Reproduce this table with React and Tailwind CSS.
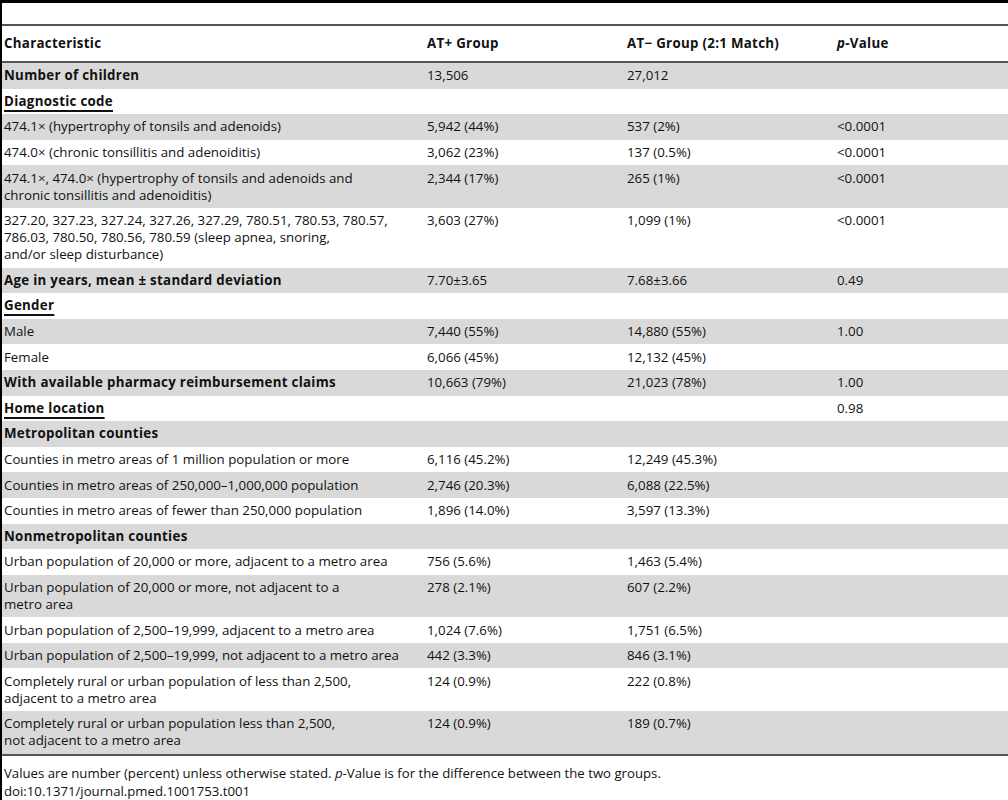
const rows = [
    { label: 'Number of children', bold: true, a: '13,506', b: '27,012', p: '' },
    { label: 'Diagnostic code', bold: true, underline: true },
    { label: '474.1\u00d7 (hypertrophy of tonsils and adenoids)', a: '5,942 (44%)', b: '537 (2%)', p: '<0.0001' },
    { label: '474.0\u00d7 (chronic tonsillitis and adenoiditis)', a: '3,062 (23%)', b: '137 (0.5%)', p: '<0.0001' },
    { label: ['474.1\u00d7, 474.0\u00d7 (hypertrophy of tonsils and adenoids and', 'chronic tonsillitis and adenoiditis)'], a: '2,344 (17%)', b: '265 (1%)', p: '<0.0001' },
    { label: ['327.20, 327.23, 327.24, 327.26, 327.29, 780.51, 780.53, 780.57,', '786.03, 780.50, 780.56, 780.59 (sleep apnea, snoring,', 'and/or sleep disturbance)'], a: '3,603 (27%)', b: '1,099 (1%)', p: '<0.0001' },
    { label: 'Age in years, mean \u00b1 standard deviation', bold: true, a: '7.70\u00b13.65', b: '7.68\u00b13.66', p: '0.49' },
    { label: 'Gender', bold: true, underline: true },
    { label: 'Male', a: '7,440 (55%)', b: '14,880 (55%)', p: '1.00' },
    { label: 'Female', a: '6,066 (45%)', b: '12,132 (45%)', p: '' },
    { label: 'With available pharmacy reimbursement claims', bold: true, a: '10,663 (79%)', b: '21,023 (78%)', p: '1.00' },
    { label: 'Home location', bold: true, underline: true, p: '0.98' },
    { label: 'Metropolitan counties', bold: true },
    { label: 'Counties in metro areas of 1 million population or more', a: '6,116 (45.2%)', b: '12,249 (45.3%)' },
    { label: 'Counties in metro areas of 250,000\u20131,000,000 population', a: '2,746 (20.3%)', b: '6,088 (22.5%)' },
    { label: 'Counties in metro areas of fewer than 250,000 population', a: '1,896 (14.0%)', b: '3,597 (13.3%)' },
    { label: 'Nonmetropolitan counties', bold: true },
    { label: 'Urban population of 20,000 or more, adjacent to a metro area', a: '756 (5.6%)', b: '1,463 (5.4%)' },
    { label: ['Urban population of 20,000 or more, not adjacent to a', 'metro area'], a: '278 (2.1%)', b: '607 (2.2%)' },
    { label: 'Urban population of 2,500\u201319,999, adjacent to a metro area', a: '1,024 (7.6%)', b: '1,751 (6.5%)' },
    { label: 'Urban population of 2,500\u201319,999, not adjacent to a metro area', a: '442 (3.3%)', b: '846 (3.1%)' },
    { label: ['Completely rural or urban population of less than 2,500,', 'adjacent to a metro area'], a: '124 (0.9%)', b: '222 (0.8%)' },
    { label: ['Completely rural or urban population less than 2,500,', 'not adjacent to a metro area'], a: '124 (0.9%)', b: '189 (0.7%)' },
]

function Label({ row }) {
    const lines = Array.isArray(row.label) ? row.label : [row.label]
    let cls = row.bold ? 'font-bold tracking-[0.3px]' : ''
    if (row.underline) cls += ' underline decoration-2 underline-offset-[4px]'
    return (
        <span className={cls}>
            {lines.map((l, i) => (
                <span key={i}>
                    {i > 0 && <br />}
                    {l}
                </span>
            ))}
        </span>
    )
}

export default function App() {
    return (
        <div className="w-[1008px] h-[800px] bg-white border-l-2 border-black text-[13.3px] leading-[17px] text-[#111] overflow-hidden" style={{ fontFamily: '"Open Sans", "Liberation Sans", sans-serif' }}>
            <div className="border-t-[3px] border-black h-[24px]" />
            <table className="w-full table-fixed border-collapse">
                <colgroup>
                    <col className="w-[423px]" />
                    <col className="w-[200px]" />
                    <col className="w-[210px]" />
                    <col />
                </colgroup>
                <thead>
                    <tr className="border-t-2 border-b-2 border-[#555] tracking-[0.3px]">
                        <th className="text-left font-bold pl-[2px] h-[37px]">Characteristic</th>
                        <th className="text-left font-bold pl-[2px]">AT+ Group</th>
                        <th className="text-left font-bold pl-[2px]">AT{'\u2212'} Group (2:1 Match)</th>
                        <th className="text-left font-bold pl-[2px]"><span className="italic">p</span>-Value</th>
                    </tr>
                </thead>
                <tbody>
                    {rows.map((row, i) => (
                        <tr key={i} className={i % 2 === 0 ? 'bg-[#d9d9d9]' : 'bg-white'}>
                            <td className="pl-[2px] py-[4.3px] align-top"><Label row={row} /></td>
                            <td className="pl-[2px] py-[4.3px] align-top">{row.a}</td>
                            <td className="pl-[2px] py-[4.3px] align-top">{row.b}</td>
                            <td className="pl-[2px] py-[4.3px] align-top">{row.p}</td>
                        </tr>
                    ))}
                </tbody>
            </table>
            <div className="border-t-2 border-[#555] pt-[8px] pl-[2px] text-[13.2px] leading-[18px]">
                <div>Values are number (percent) unless otherwise stated. <span className="italic">p</span>-Value is for the difference between the two groups.</div>
                <div>doi:10.1371/journal.pmed.1001753.t001</div>
            </div>
        </div>
    )
}
